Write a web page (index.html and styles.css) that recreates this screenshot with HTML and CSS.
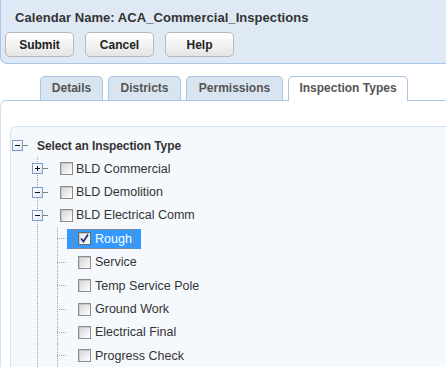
FILE: index.html
```html
<!DOCTYPE html>
<html lang="en">

<head>
    <meta charset="UTF-8">
    <title>Calendar - Inspection Types</title>
    <link rel="stylesheet" href="styles.css">
</head>

<body>
    <div class="header">
        <h1 class="title">Calendar Name: ACA_Commercial_Inspections</h1>
        <div class="actions">
            <button class="btn">Submit</button>
            <button class="btn">Cancel</button>
            <button class="btn">Help</button>
        </div>
    </div>

    <div class="tabs">
        <div class="tab tab-details">Details</div>
        <div class="tab tab-districts">Districts</div>
        <div class="tab tab-permissions">Permissions</div>
        <div class="tab tab-types active">Inspection Types</div>
    </div>

    <div class="content">
        <div class="panel">
            <div class="tree">
                <!-- root -->
                <div class="node root">
                    <span class="cell root-cell"><span class="exp minus"></span></span>
                    <span class="label">Select an Inspection Type</span>
                </div>

                <!-- level 1 -->
                <div class="node lvl1">
                    <span class="cell tee"><span class="exp plus"></span></span>
                    <span class="check"></span>
                    <span class="label">BLD Commercial</span>
                </div>
                <div class="node lvl1">
                    <span class="cell tee"><span class="exp minus"></span></span>
                    <span class="check"></span>
                    <span class="label">BLD Demolition</span>
                </div>
                <div class="node lvl1">
                    <span class="cell tee"><span class="exp minus"></span></span>
                    <span class="check"></span>
                    <span class="label">BLD Electrical Comm</span>
                </div>

                <!-- level 2 -->
                <div class="node lvl2">
                    <span class="cell vline"></span>
                    <span class="cell leaf"></span>
                    <span class="item selected">
                        <span class="focus">
                            <span class="check checked">
                                <svg width="11" height="11" viewBox="0 0 11 11"><path d="M2 5.5 L4.5 8.5 L9 1.5" fill="none" stroke="#27307a" stroke-width="1.8"/></svg>
                            </span>
                            <span class="label">Rough</span>
                        </span>
                    </span>
                </div>
                <div class="node lvl2">
                    <span class="cell vline"></span>
                    <span class="cell leaf"></span>
                    <span class="item"><span class="focus"><span class="check"></span><span class="label">Service</span></span></span>
                </div>
                <div class="node lvl2">
                    <span class="cell vline"></span>
                    <span class="cell leaf"></span>
                    <span class="item"><span class="focus"><span class="check"></span><span class="label">Temp Service Pole</span></span></span>
                </div>
                <div class="node lvl2">
                    <span class="cell vline"></span>
                    <span class="cell leaf"></span>
                    <span class="item"><span class="focus"><span class="check"></span><span class="label">Ground Work</span></span></span>
                </div>
                <div class="node lvl2">
                    <span class="cell vline"></span>
                    <span class="cell leaf"></span>
                    <span class="item"><span class="focus"><span class="check"></span><span class="label">Electrical Final</span></span></span>
                </div>
                <div class="node lvl2">
                    <span class="cell vline"></span>
                    <span class="cell leaf"></span>
                    <span class="item"><span class="focus"><span class="check"></span><span class="label">Progress Check</span></span></span>
                </div>
            </div>
        </div>
    </div>
</body>

</html>
```

FILE: styles.css
```css
body, h1 {
    margin: 0;
    padding: 0;
}

body {
    font-family: 'Liberation Sans', Arial, sans-serif;
    color: #333;
    background-color: #fff;
    height: 367px;
    overflow: hidden;
}

/* Header */
.header {
    height: 64px;
    box-sizing: border-box;
    background-color: #dfe9f5;
    border-left: 1px solid #a9c6e4;
    border-bottom: 1px solid #a9c6e4;
    border-bottom-left-radius: 7px;
    padding: 10px 0 0 4px;
}

.title {
    font-size: 13px;
    font-weight: bold;
    color: #333;
    margin-left: 10px;
    line-height: 16px;
    letter-spacing: 0.05px;
}

.actions {
    display: flex;
    gap: 11px;
    margin-top: 6px;
}

.btn {
    width: 69px;
    height: 25px;
    font-family: inherit;
    font-size: 12px;
    font-weight: bold;
    color: #222;
    background: linear-gradient(#ffffff, #f3f3f3 50%, #e4e4e4);
    border: 1px solid #b9b9b9;
    border-radius: 5px;
    padding: 0;
}

/* Tabs */
.tabs {
    display: flex;
    gap: 5px;
    margin-top: 12px;
    padding-left: 40px;
    height: 24px;
}

.tab {
    box-sizing: border-box;
    height: 24px;
    font-size: 12px;
    font-weight: bold;
    color: #555;
    background-color: #d8e4f0;
    border: 1px solid #a9c6e4;
    border-bottom: none;
    border-radius: 5px 5px 0 0;
    text-align: center;
    line-height: 23px;
}

.tab-details { width: 63px; }
.tab-districts { width: 73px; }
.tab-permissions { width: 97px; }
.tab-types { width: 120px; }

.tab.active {
    background-color: #fff;
    height: 25px;
    position: relative;
    z-index: 1;
}

/* Content */
.content {
    box-sizing: border-box;
    height: 267px;
    border-top: 1px solid #a9c6e4;
    border-left: 1px solid #d3e2f1;
    border-top-left-radius: 6px;
    padding: 25px 0 0 9px;
}

.panel {
    box-sizing: border-box;
    height: 100%;
    background-color: #f5f9fd;
    border-top: 1px solid #d3e1ef;
    border-left: 1px solid #d3e1ef;
    border-top-left-radius: 6px;
    padding-top: 7px;
    overflow: hidden;
}

/* Tree */
.node {
    display: flex;
    align-items: center;
    height: 23.4px;
    font-size: 12.5px;
    color: #333;
}

.root {
    height: 23px;
}

.root .label {
    font-weight: bold;
    font-size: 12px;
    letter-spacing: -0.1px;
}

.cell {
    display: flex;
    align-items: center;
    width: 20px;
    height: 100%;
    flex-shrink: 0;
    background-repeat: no-repeat;
}

.root-cell {
    width: 26px;
    background-image: linear-gradient(#7d7d7d, #7d7d7d);
    background-size: 5px 1px;
    background-position: 12px center;
}

.root-cell .exp {
    margin-left: 1px;
}

.lvl1,
.lvl2 {
    margin-left: 17px;
}

/* vertical dotted guide + short dash to the right */
.tee {
    background-image:
        linear-gradient(#7d7d7d, #7d7d7d),
        repeating-linear-gradient(to bottom, #a5a5a5 0 1px, transparent 1px 2px);
    background-size: 5px 1px, 1px 100%;
    background-position: 15px center, 9px 0;
}

.vline {
    background-image: repeating-linear-gradient(to bottom, #a5a5a5 0 1px, transparent 1px 2px);
    background-size: 1px 100%;
    background-position: 9px 0;
}

.leaf {
    width: 19px;
    background-image:
        repeating-linear-gradient(to right, #a5a5a5 0 1px, transparent 1px 2px),
        repeating-linear-gradient(to bottom, #a5a5a5 0 1px, transparent 1px 2px);
    background-size: 10px 1px, 1px 100%;
    background-position: 9px center, 9px 0;
}

.exp {
    display: block;
    box-sizing: border-box;
    width: 11px;
    height: 11px;
    margin-left: 4px;
    border: 1px solid #7b9cc7;
    background: linear-gradient(135deg, #ffffff, #e3e9f1);
    position: relative;
}

.exp::before,
.exp::after {
    content: "";
    position: absolute;
    background-color: #111;
}

.exp::before {
    left: 2px;
    top: 4px;
    width: 5px;
    height: 1px;
}

.plus::after {
    left: 4px;
    top: 2px;
    width: 1px;
    height: 5px;
}

.check {
    display: flex;
    align-items: center;
    justify-content: center;
    box-sizing: border-box;
    width: 13px;
    height: 13px;
    border: 1px solid #8c8c8c;
    box-shadow: inset 1px 1px 0 #c9c9c9;
    background: linear-gradient(135deg, #d2d2d2, #f4f4f4 75%, #ffffff);
    flex-shrink: 0;
}

.lvl1 .check {
    margin-left: 12px;
}

.lvl1 .label {
    margin-left: 3px;
}

.item {
    display: flex;
    align-items: center;
    height: 20px;
    padding: 0 7px 0 6px;
}

.focus {
    display: flex;
    align-items: center;
    height: 20px;
    box-sizing: border-box;
    border: 1px dotted transparent;
    padding: 0 1px 0 4px;
}

.focus .label {
    margin-left: 4px;
}

.item.selected {
    background-color: #3399ff;
}

.item.selected .focus {
    border-color: #c77b2a;
}

.item.selected .label {
    color: #fff;
}

.check.checked {
    background: linear-gradient(135deg, #e2e6f0, #ffffff);
    border-color: #6d6d6d;
}

.check svg {
    display: block;
}
```
